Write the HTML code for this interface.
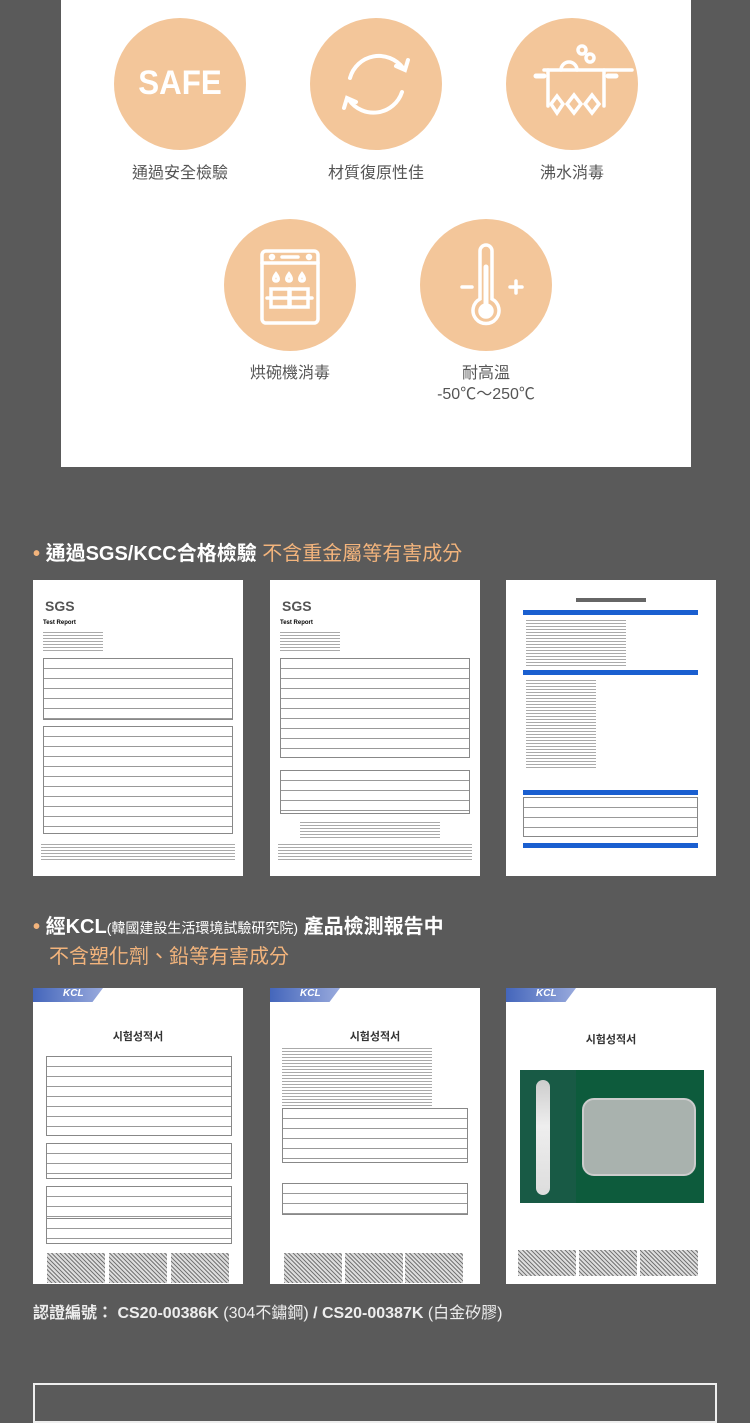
<!DOCTYPE html>
<html><head><meta charset="utf-8"><style>
*{margin:0;padding:0;box-sizing:border-box}
body{width:750px;height:1400px;background:#5a5a5a;position:relative;overflow:hidden;font-family:"Liberation Sans","Noto Sans CJK TC",sans-serif}
.panel{position:absolute;left:61px;top:0;width:630px;height:467px;background:#fff}
.c{position:absolute;width:132px;height:132px;border-radius:50%;background:#f3c69a}
.lb{position:absolute;width:200px;text-align:center;font-size:16px;color:#555;line-height:21px}
.doc{position:absolute;background:#fff;width:210px;height:296px;overflow:hidden}
.t{position:absolute;font-size:20px;font-weight:bold;color:#fff}
.o{color:#f3b47c}
.tbl{position:absolute;border:1px solid #888;background:repeating-linear-gradient(#fff 0 9px,#999 9px 10px)}
.txt{position:absolute;background:repeating-linear-gradient(#fff 0 2px,#aaa 2px 3px)}
.kcl{position:absolute;left:0;top:0;width:70px;height:14px;background:linear-gradient(90deg,#4466bb,#99aadd);clip-path:polygon(0 0,100% 0,85% 100%,0 100%);color:#fff;font-style:italic;font-size:10px;font-weight:bold;padding-left:30px}
.kh{position:absolute;width:100%;text-align:center;font-size:11px;font-weight:bold;color:#333;font-family:"Liberation Sans","Noto Sans CJK KR",sans-serif}
.noise{position:absolute;height:30px;width:58px;background:repeating-linear-gradient(45deg,#777 0 1px,#ddd 1px 3px)}
</style></head><body>
<div class="panel">
 <div class="c" style="left:53px;top:18px"><div style="position:absolute;width:100%;top:46px;text-align:center;color:#fff;font-weight:bold;font-size:34px;transform:scaleX(0.92)">SAFE</div></div>
 <div class="c" style="left:249px;top:18px"><svg width="132" height="132" viewBox="0 0 132 132" fill="none" stroke="#fff" stroke-width="4" stroke-linecap="round"><path d="M40 60 A30 30 0 0 1 93 50"/><path d="M86 48 L95 52 L98 42"/><path d="M92 74 A30 30 0 0 1 39 82"/><path d="M46 84 L37 80 L34 90"/></svg></div>
 <div class="c" style="left:445px;top:18px"><svg width="132" height="132" viewBox="0 0 132 132" fill="none" stroke="#fff" stroke-width="3.5" stroke-linecap="round"><circle cx="76" cy="32" r="4"/><circle cx="84" cy="40" r="4"/><path d="M55 52a8 8 0 0 1 16 0"/><path d="M38 52h88"/><path d="M42 52v36M98 52v36"/><path d="M30 58h8M102 58h8" stroke-width="5"/><path d="M45 86l6-8 6 8-6 9zM61 86l7-9 7 9-7 9zM79 86l7-9 7 9-7 9z"/></svg></div>
 <div class="c" style="left:163px;top:219px"><svg width="132" height="132" viewBox="0 0 132 132" fill="none" stroke="#fff" stroke-width="3.5" stroke-linecap="round"><rect x="38" y="32" width="56" height="72" rx="4"/><path d="M38 44h56M58 38h16"/><circle cx="48" cy="38" r="1.5"/><circle cx="85" cy="38" r="1.5"/><path d="M52 55c-3 4-3 7 0 7s3-3 0-7zM65 55c-3 4-3 7 0 7s3-3 0-7zM78 55c-3 4-3 7 0 7s3-3 0-7z"/><rect x="47" y="70" width="18" height="18"/><rect x="66" y="70" width="18" height="18"/><path d="M47 79h37M43 79h4M84 79h4"/></svg></div>
 <div class="c" style="left:359px;top:219px"><svg width="132" height="132" viewBox="0 0 132 132" fill="none" stroke="#fff" stroke-width="3.5" stroke-linecap="round"><path d="M60 80V32a6 6 0 0 1 12 0v48a13 13 0 1 1-12 0z"/><path d="M66 48v40" stroke-width="5"/><circle cx="66" cy="92" r="6" fill="#fff"/><path d="M42 68h10M90 68h12M96 62v12"/></svg></div>
 <div class="lb" style="left:19px;top:163px">通過安全檢驗</div>
 <div class="lb" style="left:215px;top:163px">材質復原性佳</div>
 <div class="lb" style="left:411px;top:163px">沸水消毒</div>
 <div class="lb" style="left:129px;top:363px">烘碗機消毒</div>
 <div class="lb" style="left:325px;top:363px">耐高溫<br>-50℃～250℃</div>
</div>

<div class="t" style="left:33px;top:537px"><span class="o">•</span> 通過SGS/KCC合格檢驗 <span class="o" style="font-weight:normal">不含重金屬等有害成分</span></div>

<div class="doc" style="left:33px;top:580px"><div style="position:absolute;left:12px;top:18px;font-weight:bold;color:#555;font-size:14px">SGS</div><div style="position:absolute;left:10px;top:40px;font-size:6px;font-weight:bold">Test Report</div><div class="txt" style="left:10px;top:50px;width:60px;height:22px"></div><div class="tbl" style="left:10px;top:78px;width:190px;height:62px"></div><div class="tbl" style="left:10px;top:146px;width:190px;height:108px"></div><div class="txt" style="left:8px;top:262px;width:194px;height:20px"></div></div>
<div class="doc" style="left:270px;top:580px"><div style="position:absolute;left:12px;top:18px;font-weight:bold;color:#555;font-size:14px">SGS</div><div style="position:absolute;left:10px;top:40px;font-size:6px;font-weight:bold">Test Report</div><div class="txt" style="left:10px;top:50px;width:60px;height:22px"></div><div class="tbl" style="left:10px;top:78px;width:190px;height:100px"></div><div class="tbl" style="left:10px;top:190px;width:190px;height:44px"></div><div class="txt" style="left:30px;top:240px;width:140px;height:18px"></div><div class="txt" style="left:8px;top:262px;width:194px;height:20px"></div></div>
<div class="doc" style="left:506px;top:580px"><div style="position:absolute;left:70px;top:18px;width:70px;height:4px;background:#666"></div><div style="position:absolute;left:17px;top:30px;width:175px;height:5px;background:#1a5fd0"></div><div class="txt" style="left:20px;top:38px;width:100px;height:50px"></div><div style="position:absolute;left:17px;top:90px;width:175px;height:5px;background:#1a5fd0"></div><div class="txt" style="left:20px;top:98px;width:70px;height:90px"></div><div style="position:absolute;left:17px;top:210px;width:175px;height:5px;background:#1a5fd0"></div><div class="tbl" style="left:17px;top:217px;width:175px;height:40px"></div><div style="position:absolute;left:17px;top:263px;width:175px;height:5px;background:#1a5fd0"></div></div>

<div class="t" style="left:33px;top:913px;line-height:29px"><span class="o">•</span> 經KCL<span style="font-size:14px;font-weight:normal">(韓國建設生活環境試驗研究院)</span> 產品檢測報告中<br><span class="o" style="font-weight:normal;padding-left:16px">不含塑化劑、鉛等有害成分</span></div>

<div class="doc" style="left:33px;top:988px"><div class="kcl">KCL</div><div class="kh" style="top:40px">시험성적서</div><div class="tbl" style="left:13px;top:68px;width:186px;height:80px"></div><div class="tbl" style="left:13px;top:155px;width:186px;height:36px"></div><div class="tbl" style="left:13px;top:198px;width:186px;height:36px"></div><div class="tbl" style="left:13px;top:230px;width:186px;height:26px"></div><div class="noise" style="left:14px;top:265px"></div><div class="noise" style="left:76px;top:265px"></div><div class="noise" style="left:138px;top:265px"></div></div>
<div class="doc" style="left:270px;top:988px"><div class="kcl">KCL</div><div class="kh" style="top:40px">시험성적서</div><div class="txt" style="left:12px;top:58px;width:150px;height:60px"></div><div class="tbl" style="left:12px;top:120px;width:186px;height:55px"></div><div class="tbl" style="left:12px;top:195px;width:186px;height:32px"></div><div class="noise" style="left:14px;top:265px"></div><div class="noise" style="left:75px;top:265px"></div><div class="noise" style="left:135px;top:265px"></div></div>
<div class="doc" style="left:506px;top:988px"><div class="kcl">KCL</div><div class="kh" style="top:43px">시험성적서</div><div style="position:absolute;left:14px;top:82px;width:184px;height:133px;background:#0d5b3c"><div style="position:absolute;left:0;top:0;width:56px;height:133px;background:#185a45"></div><div style="position:absolute;left:16px;top:10px;width:14px;height:115px;border-radius:7px;background:linear-gradient(#ccc,#eee 40%,#ddd)"></div><div style="position:absolute;left:62px;top:28px;width:114px;height:78px;border-radius:12px;background:#a9b2ae;border:2px solid #ccc"></div></div><div class="noise" style="left:12px;top:262px;height:26px"></div><div class="noise" style="left:73px;top:262px;height:26px"></div><div class="noise" style="left:134px;top:262px;height:26px"></div></div>

<div style="position:absolute;left:33px;top:1299px;color:#eee;font-size:16px;font-weight:bold">認證編號： CS20-00386K <span style="font-weight:normal">(304不鏽鋼)</span> / CS20-00387K <span style="font-weight:normal">(白金矽膠)</span></div>
<div style="position:absolute;left:33px;top:1383px;width:684px;height:40px;border:2px solid #eee"></div>
</body></html>
